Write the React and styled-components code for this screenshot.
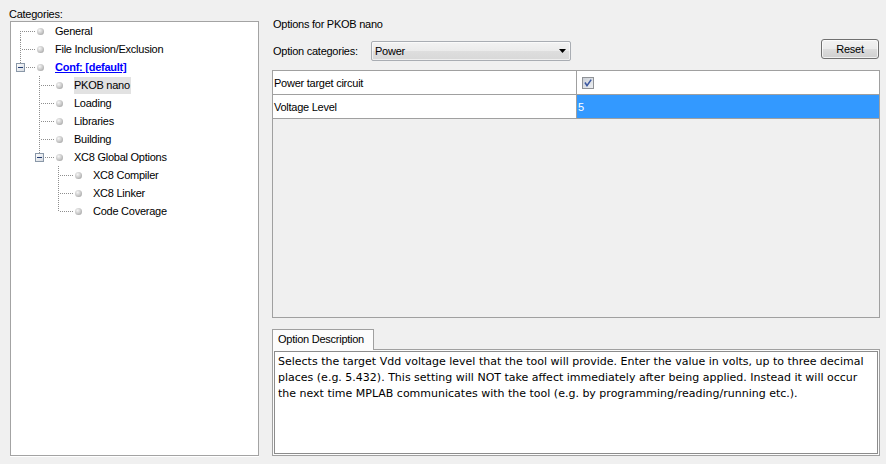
import React from "react";
import styled, { createGlobalStyle } from "styled-components";

const GlobalStyle = createGlobalStyle`
  html, body {
    margin: 0;
    padding: 0;
    background: #f0f0f0;
  }
  body {
    font-family: "Liberation Sans", Arial, sans-serif;
    font-size: 11px;
    color: #000;
  }
  * {
    box-sizing: border-box;
  }
`;

const tree = [
  { label: "General", guides: [], conn: "first" },
  { label: "File Inclusion/Exclusion", guides: [], conn: "mid" },
  { label: "Conf: [default]", guides: [], conn: "last", expander: true, link: true },
  { label: "PKOB nano", guides: [false], conn: "mid", selected: true },
  { label: "Loading", guides: [false], conn: "mid" },
  { label: "Libraries", guides: [false], conn: "mid" },
  { label: "Building", guides: [false], conn: "mid" },
  { label: "XC8 Global Options", guides: [false], conn: "last", expander: true },
  { label: "XC8 Compiler", guides: [false, false], conn: "mid" },
  { label: "XC8 Linker", guides: [false, false], conn: "mid" },
  { label: "Code Coverage", guides: [false, false], conn: "last" },
];

const description = [
  "Selects the target Vdd voltage level that the tool will provide. Enter the value in volts, up to three decimal",
  "places (e.g. 5.432). This setting will NOT take affect immediately after being applied. Instead it will occur",
  "the next time MPLAB communicates with the tool (e.g. by programming/reading/running etc.).",
];

const DOT = "#8e8e8e";

const Guide = ({ line }) => (
  <svg width="19" height="18">
    {line && (
      <line x1="9.5" y1="0" x2="9.5" y2="18" stroke={DOT} strokeDasharray="1 1" shapeRendering="crispEdges" />
    )}
  </svg>
);

const Connector = ({ conn, expander }) => {
  const top = conn === "first" ? 9 : 0;
  const bottom = conn === "last" ? (expander ? 5 : 9) : 18;
  return (
    <svg width="25" height="18">
      <line x1="9.5" y1={top} x2="9.5" y2={bottom} stroke={DOT} strokeDasharray="1 1" shapeRendering="crispEdges" />
      <line x1={expander ? 15 : 11} y1="9.5" x2="24" y2="9.5" stroke={DOT} strokeDasharray="1 1" shapeRendering="crispEdges" />
      {expander && (
        <>
          <defs>
            <linearGradient id="exp" x1="0" y1="0" x2="1" y2="1">
              <stop offset="0" stopColor="#ffffff" />
              <stop offset="1" stopColor="#d4d9e0" />
            </linearGradient>
          </defs>
          <rect x="5.5" y="5.5" width="8" height="8" fill="url(#exp)" stroke="#8a98a8" shapeRendering="crispEdges" />
          <line x1="7" y1="9.5" x2="12" y2="9.5" stroke="#203a70" shapeRendering="crispEdges" />
        </>
      )}
    </svg>
  );
};

const CheckBox = () => (
  <svg width="12" height="12" viewBox="0 0 12 12">
    <defs>
      <linearGradient id="cb" x1="0" y1="0" x2="1" y2="1">
        <stop offset="0" stopColor="#c9ced6" />
        <stop offset="1" stopColor="#eef0f3" />
      </linearGradient>
    </defs>
    <rect x="0.5" y="0.5" width="11" height="11" fill="url(#cb)" stroke="#8f9296" />
    <path d="M3 5.5 L5 8.6 L9.2 2.6" fill="none" stroke="#3b57a0" strokeWidth="1.6" />
  </svg>
);

const ComboArrow = () => (
  <svg width="7" height="4" viewBox="0 0 7 4">
    <path d="M0 0 H7 L3.5 4 Z" fill="#000" />
  </svg>
);

export default function App() {
  return (
    <>
      <GlobalStyle />
      <Window>
        <LeftPane>
          <PaneLabel>Categories:</PaneLabel>
          <TreeBox>
            {tree.map((node) => (
              <TreeRow key={node.label}>
                {node.guides.map((g, i) => (
                  <Guide key={i} line={g} />
                ))}
                <Connector conn={node.conn} expander={node.expander} />
                <Bullet />
                <NodeLabel $link={node.link} $selected={node.selected}>
                  {node.label}
                </NodeLabel>
              </TreeRow>
            ))}
          </TreeBox>
        </LeftPane>

        <RightPane>
          <Title>Options for PKOB nano</Title>
          <OptionsRow>
            <CategoryPicker>
              <span>Option categories:</span>
              <Combo>
                <span>Power</span>
                <ComboArrow />
              </Combo>
            </CategoryPicker>
            <Button>Reset</Button>
          </OptionsRow>

          <PropertyTable>
            <PropertyRow>
              <NameCell>Power target circuit</NameCell>
              <ValueCell>
                <CheckBox />
              </ValueCell>
            </PropertyRow>
            <PropertyRow>
              <NameCell>Voltage Level</NameCell>
              <ValueCell $selected>5</ValueCell>
            </PropertyRow>
          </PropertyTable>

          <TabStrip>
            <Tab>Option Description</Tab>
          </TabStrip>
          <TabPanel>
            <DescriptionArea>
              {description.map((line) => (
                <div key={line}>{line}</div>
              ))}
            </DescriptionArea>
          </TabPanel>
        </RightPane>
      </Window>
    </>
  );
}

const Window = styled.div`
  display: flex;
  gap: 13px;
  height: 464px;
  width: 886px;
  padding: 0 6px 8px 9px;
  letter-spacing: -0.25px;
`;

const LeftPane = styled.div`
  width: 250px;
  display: flex;
  flex-direction: column;
`;

const PaneLabel = styled.div`
  height: 21px;
  padding-top: 7px;
  line-height: 14px;
`;

const TreeBox = styled.div`
  flex: 1;
  margin-left: 1px;
  background: #fff;
  border: 1px solid #a3a3a3;
  box-shadow: 0 1px 0 #ffffff;
  display: flex;
  flex-direction: column;
`;

const TreeRow = styled.div`
  display: flex;
  align-items: center;
  height: 18px;
  svg {
    flex: none;
    display: block;
  }
`;

const Bullet = styled.span`
  flex: none;
  width: 7px;
  height: 7px;
  margin-left: 1px;
  border-radius: 50%;
  background: radial-gradient(circle at 38% 35%, #f6f6f6 0%, #c4c4c4 55%, #8c8c8c 100%);
`;

const NodeLabel = styled.span`
  margin-left: 11px;
  padding: 0 1px 0 0;
  height: 17px;
  margin-top: 1px;
  line-height: 17px;
  white-space: nowrap;
  color: ${(p) => (p.$link ? "#0000ff" : "#000")};
  font-weight: ${(p) => (p.$link ? "bold" : "normal")};
  text-decoration: ${(p) => (p.$link ? "underline" : "none")};
  background: ${(p) => (p.$selected ? "#e2e2e2" : "transparent")};
`;

const RightPane = styled.div`
  flex: 1;
  display: flex;
  flex-direction: column;
`;

const Title = styled.div`
  padding: 17px 0 0 1px;
  line-height: 14px;
`;

const OptionsRow = styled.div`
  margin-top: 8px;
  height: 22px;
  display: flex;
  align-items: center;
  justify-content: space-between;
  padding-left: 1px;
`;

const CategoryPicker = styled.div`
  display: flex;
  align-items: center;
  & > span {
    width: 98px;
    padding-top: 1px;
  }
`;

const Combo = styled.div`
  width: 200px;
  height: 20px;
  margin-top: 2px;
  border: 1px solid #a9adb3;
  border-radius: 2px;
  background: linear-gradient(#f3f3f3 0%, #ebebeb 50%, #dedede 51%, #d8d8d8 100%);
  display: flex;
  align-items: center;
  justify-content: space-between;
  padding: 0 4px 0 3px;
  box-shadow: inset 0 0 0 1px rgba(255, 255, 255, 0.6);
`;

const Button = styled.div`
  width: 58px;
  height: 20px;
  margin-right: 1px;
  margin-top: -2px;
  border: 1px solid #707070;
  border-radius: 3px;
  background: linear-gradient(#f2f2f2 0%, #ebebeb 50%, #dddddd 51%, #cfcfcf 100%);
  box-shadow: inset 0 0 0 1px rgba(255, 255, 255, 0.7);
  display: flex;
  align-items: center;
  justify-content: center;
`;

const PropertyTable = styled.div`
  margin-top: 9px;
  height: 248px;
  border: 1px solid #a0a0a0;
  background: #f0f0f0;
  display: flex;
  flex-direction: column;
`;

const PropertyRow = styled.div`
  display: grid;
  grid-template-columns: 304px 1fr;
  height: 24px;
  border-bottom: 1px solid #a0a0a0;
`;

const NameCell = styled.div`
  background: #fff;
  border-right: 1px solid #a0a0a0;
  display: flex;
  align-items: center;
  padding-left: 1px;
`;

const ValueCell = styled.div`
  display: flex;
  align-items: center;
  padding-left: ${(p) => (p.$selected ? "1px" : "5px")};
  background: ${(p) => (p.$selected ? "#3399ff" : "#fff")};
  color: ${(p) => (p.$selected ? "#fff" : "#000")};
  svg {
    display: block;
  }
`;

const TabStrip = styled.div`
  margin-top: 11px;
  display: flex;
  height: 21px;
`;

const Tab = styled.div`
  width: 102px;
  height: 21px;
  border: 1px solid #a0a0a0;
  border-bottom: none;
  background: #fcfcfc;
  padding-left: 5px;
  line-height: 19px;
  position: relative;
  z-index: 1;
`;

const TabPanel = styled.div`
  flex: 1;
  margin-top: -1px;
  border: 1px solid #a0a0a0;
  background: #fcfcfc;
  padding: 1px;
  display: flex;
`;

const DescriptionArea = styled.div`
  flex: 1;
  background: #fff;
  border: 1px solid #8c8c8c;
  padding: 2px 3px;
  font-family: "DejaVu Sans", "Liberation Sans", sans-serif;
  font-size: 11px;
  letter-spacing: 0;
  line-height: 16px;
  white-space: nowrap;
`;
